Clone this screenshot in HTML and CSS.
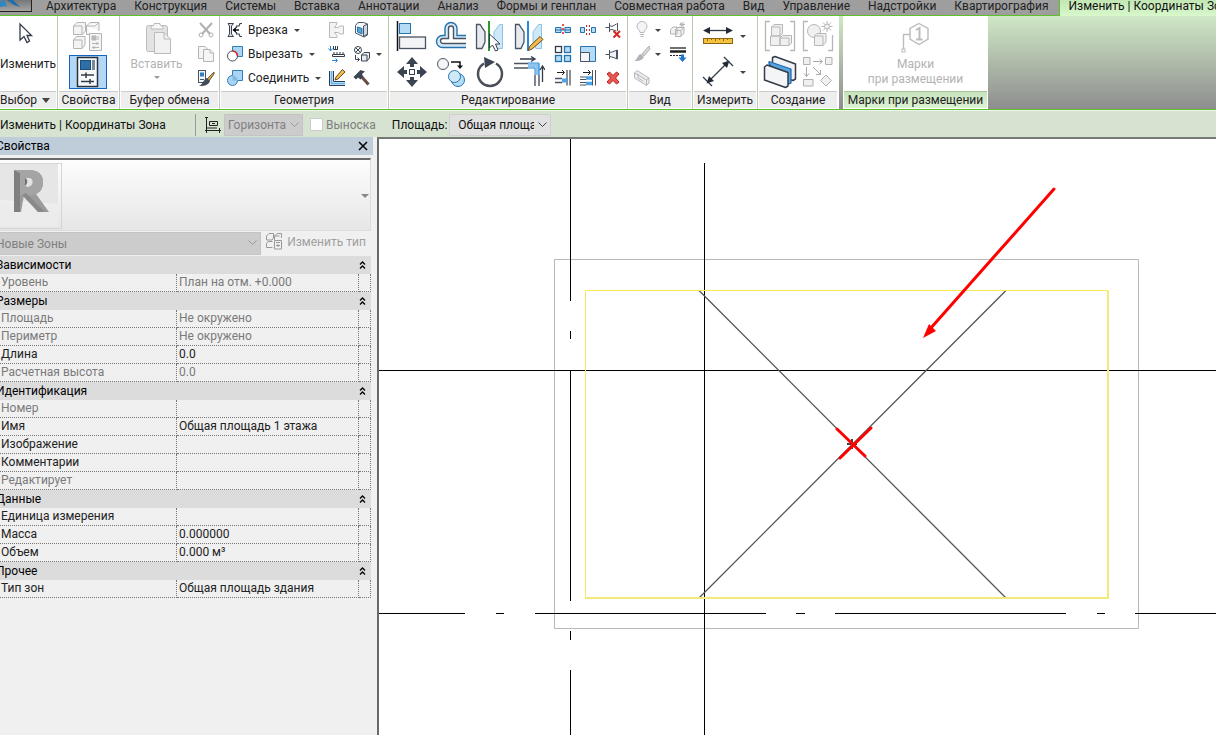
FILE: index.html
```html
<!DOCTYPE html>
<html lang="ru">
<head>
<meta charset="utf-8">
<title>Изменить | Координаты Зона</title>
<link rel="stylesheet" href="styles.css">
</head>
<body>
<nav class="tabs">
  <button class="app" aria-label="Меню приложения"><svg width="31" height="11" viewBox="0 0 31 11"><path d="M0 2 4 0 7 7 4 6 0 7Z" fill="#2a86c7"/><path d="M7 0H13L20 7 14 5Z" fill="#1c6eb0"/></svg></button>
  <a class="tab" href="#">Архитектура</a>
  <a class="tab" href="#">Конструкция</a>
  <a class="tab" href="#">Системы</a>
  <a class="tab" href="#">Вставка</a>
  <a class="tab" href="#">Аннотации</a>
  <a class="tab" href="#">Анализ</a>
  <a class="tab" href="#">Формы и генплан</a>
  <a class="tab" href="#">Совместная работа</a>
  <a class="tab" href="#">Вид</a>
  <a class="tab" href="#">Управление</a>
  <a class="tab" href="#">Надстройки</a>
  <a class="tab" href="#">Квартирография</a>
  <a class="tab active" href="#">Изменить | Координаты Зона</a>
</nav>

<div class="ribbon">
  <section class="panel p-select">
    <div class="tools center">
      <button class="big"><svg width="32" height="32" viewBox="0 0 32 32"><path d="M8 4V20L12 16.500 15 22.500 17.500 21 15 15.500H19.500Z" fill="#fff" stroke="#333c4a" stroke-width="1.300"/></svg><span>Изменить</span></button>
    </div>
    <h2>Выбор <i class="arrow wide"></i></h2>
  </section>

  <section class="panel p-props">
    <div class="tools center">
      <button class="type" disabled aria-label="Свойства типа"><svg width="32" height="32" viewBox="0 0 32 32" fill="#f4f4f4" stroke="#b4b4b4"><path d="M1.500 5 5 1.500H13.500V10L10.500 13.500H1.500ZM1.500 5H10V13.500M14.500 5 18 1.500H27V10M14.500 5H23L27 1.500M14.500 5V13.500H19M1.500 19 4.500 15.500H13V24L10 27.500H1.500ZM1.500 19H10V27.500"/><path d="M17.500 12.500H29.500V29.500H17.500Z"/><path d="M20 15H24V19H20Z" fill="#bbb"/><path d="M26 15V19M20 22.500H27M25 21V24M20 26.500H27M22 25V28"/></svg></button>
      <button class="props pressed" aria-label="Свойства"><svg width="32" height="32" viewBox="0 0 32 32"><rect x="5.500" y="1.500" width="20" height="29" fill="#f7f8fa" stroke="#2b3340" stroke-width="1.500"/><rect x="8.500" y="4.500" width="10" height="9" fill="#2f6fa8" stroke="#1d4c7c"/><path d="M20 4V14H23V4Z" fill="#7d8896"/><path d="M9 19H22M14 16.500V22M9 25.500H22M18 23V28" stroke="#333c4a" stroke-width="1.500"/></svg></button>
    </div>
    <h2>Свойства</h2>
  </section>

  <section class="panel p-clip">
    <div class="tools">
      <button class="big paste" disabled><svg width="32" height="36" viewBox="0 0 32 36" fill="#f1f1f1" stroke="#bbb"><rect x="5.500" y="4.500" width="21" height="26" rx="2" fill="#e3e3e3"/><path d="M10 8V5.500L13 4V2.500H19V4L22 5.500V8Z" fill="#f8f8f8"/><path d="M13.500 11.500H23L29.500 18V32.500H13.500Z"/><path d="M23 11.500V18H29.500" fill="none"/></svg><span>Вставить</span><i class="arrow"></i></button>
      <div class="small-grid one">
        <button disabled aria-label="Вырезать в буфер"><svg width="18" height="18" viewBox="0 0 18 18" fill="none" stroke="#b0b0b0"><path d="M3 2 13 13M15 2 5 13" stroke-width="2"/><circle cx="4" cy="14" r="2"/><circle cx="14" cy="14" r="2"/></svg></button>
        <button disabled aria-label="Копировать в буфер"><svg width="18" height="18" viewBox="0 0 18 18" fill="#f5f5f5" stroke="#b4b4b4"><path d="M1.500 1.500H8L11.500 5V13.500H1.500Z"/><path d="M6.500 4.500H13L16.500 8V16.500H6.500Z"/><path d="M13 4.500V8H16.500"/></svg></button>
        <button aria-label="Копирование свойств"><svg width="18" height="18" viewBox="0 0 18 18"><rect x="1.500" y="1.500" width="7" height="12" fill="#f4f6f8" stroke="#4a5462"/><rect x="3" y="3.500" width="4" height="4" fill="#2f7fc8"/><path d="M3 10.500H7" stroke="#4a5462"/><path d="M17 3 10 10 12 12 17 5Z" fill="#d9a441" stroke="#6b5a3a"/><path d="M10 9 13 12C11 17 6 17 2 17 6 15 6 11 10 9Z" fill="#444d5a"/></svg></button>
      </div>
    </div>
    <h2>Буфер обмена</h2>
  </section>

  <section class="panel p-geom">
    <div class="tools">
      <div class="labelled">
        <button><svg width="16" height="16" viewBox="0 0 16 16" fill="none" stroke="#3b4452"><path d="M1 1.500H6.500L4.500 4V12L6.500 14.500H1L2.500 12V4Z" fill="#dde2e8"/><path d="M15 1.500H13L12 4H9.500V6M9.500 10V12H12L13 14.500H15" stroke-width="1.200"/><path d="M6 8H12" stroke="#111" stroke-width="1.500"/><path d="M9 5 5.500 8 9 11Z" fill="#111" stroke="none"/></svg><span>Врезка</span><i class="arrow"></i></button>
        <button><svg width="16" height="16" viewBox="0 0 16 16"><path d="M5.500.500H15.500V10.500H5.500Z" fill="#a9d4f3" stroke="#2f7fb8"/><circle cx="5.500" cy="10" r="5" fill="#fff" stroke="#444d5a"/><path d="M5.500 5A5 5 0 0 1 10.500 10" fill="none" stroke="#e02020" stroke-width="1.500"/></svg><span>Вырезать</span><i class="arrow"></i></button>
        <button><svg width="16" height="16" viewBox="0 0 16 16" fill="#a9d4f3" stroke="#2f7fb8"><path d="M5.500.500H15.500V10.500H10.500A5 5 0 1 1 5.500 5.500Z"/><path d="M5.500 5.500A5 5 0 0 1 10.500 10.500H5.500Z" fill="#7fbbe6" stroke="none"/></svg><span>Соединить</span><i class="arrow"></i></button>
      </div>
      <div class="small-grid two">
        <button disabled aria-label="Соединение крыш"><svg width="18" height="18" viewBox="0 0 18 18" fill="#f3f3f3" stroke="#b9b9b9"><path d="M1.500 1.500H9V3L6.500 6.500H10L12 5H15.500V13H12L10 11.500H6.500L9 14.500V16.500H1.500Z"/></svg></button>
        <button aria-label="Соединение стен"><svg width="18" height="18" viewBox="0 0 18 18"><path d="M2.500 4.500 5 1.500H10.500L14.500 3V14L11 16 2.500 12Z" fill="#f5f7f9" stroke="#4a5462"/><path d="M10.500 5V15.500L14.500 13V3Z" fill="#cfd6de" stroke="#4a5462"/><path d="M4.500 6 9 7.500V13L4.500 11Z" fill="#57a5df" stroke="#2672ad"/></svg></button>
        <button aria-label="Балки"><svg width="18" height="18" viewBox="0 0 18 18"><path d="M2.500 1V5M.500 3.500 2.500 6 4.500 3.500M4 15.500H9M7.500 13.500 9.500 15.500 7.500 17.500" fill="none" stroke="#2589dd"/><path d="M5.500 1V4.500H9.500V1M7.500 1V4.500M4.500 9.500H16.500V11.500H4.500Z" fill="#fff" stroke="#333c4a"/><path d="M5 8H16" stroke="#333c4a" stroke-dasharray="2 1"/></svg></button>
        <button aria-label="Разделить грань"><svg width="18" height="18" viewBox="0 0 18 18" fill="#fff" stroke="#3b4452"><circle cx="5" cy="5" r="3.500"/><path d="M2.500 2.500 7.500 7.500M7.500 2.500 2.500 7.500"/><path d="M8.500 10 11 7.500H16.500V13L14 16H8.500ZM8.500 10H14V16" fill="#e8ebef"/><path d="M2.500 10V14.500H6M4.500 12.500 6.500 14.500 4.500 16.500" fill="none"/></svg></button>
        <button aria-label="Профиль стены"><svg width="18" height="18" viewBox="0 0 18 18"><path d="M1.500 2V16.500H17M5.500 2V12.500H17" fill="none" stroke="#333c4a"/><path d="M3.500 2V14.500H17" fill="none" stroke="#62b5ef" stroke-width="2"/><path d="M14.500.500 17 3 10 10 7 11 8 8Z" fill="#f2bc4b" stroke="#6b4a22"/></svg></button>
        <button aria-label="Разрушить"><svg width="18" height="18" viewBox="0 0 18 18"><path d="M8 7 15.500 15.500" stroke="#6a4a44" stroke-width="3"/><path d="M.500 8 7.500 1 12 2.500 9 5 10 8 7.500 10.500 5 8.500 3 10.500Z" fill="#3b4452"/></svg></button>
      </div>
      <div class="arrow-col"><i class="arrow"></i></div>
    </div>
    <h2>Геометрия</h2>
  </section>

  <section class="panel p-edit">
    <div class="tools">
      <div class="large-grid four">
        <button aria-label="Выровнять"><svg width="32" height="32" viewBox="0 0 32 32"><path d="M1.500 1V31" stroke="#111" stroke-width="1.500"/><rect x="3.500" y="3.500" width="11" height="10" fill="#b5dcf6" stroke="#2672ad"/><rect x="3.500" y="17" width="26" height="11.500" fill="#f2f4f6" stroke="#4a5462" stroke-width="1.300"/></svg></button>
        <button aria-label="Смещение"><svg width="32" height="32" viewBox="0 0 32 32" fill="none"><path d="M31 27.500H7.500A6 6 0 0 1 7.500 15.500H10V8.500A6 6 0 0 1 22 8.500V15.500H31" stroke="#2672ad" stroke-width="1.400" fill="#d7ebf8"/><path d="M31 23.500H8A2.500 2.500 0 0 1 8 18.500H13.500V8.500A2.500 2.500 0 0 1 18.500 8.500V18.500H31" stroke="#4a5462" stroke-width="1.400" fill="#fff"/></svg></button>
        <button aria-label="Отразить по оси"><svg width="32" height="32" viewBox="0 0 32 32"><path d="M2.500 28.500V4.500H6L11 12V22L8 28.500Z" fill="#e7eaee" stroke="#4a5462" stroke-width="1.300"/><path d="M28.500 28.500V4.500H25.500L20 12V22L23 28.500Z" fill="#cfe8f8" stroke="#8cc4e8"/><path d="M15 1V31" stroke="#2b9a2b" stroke-width="2"/><path d="M15.500 14V28L18.500 25 21.500 31 24 30 21.500 24H26Z" fill="#fff" stroke="#333c4a"/></svg></button>
        <button aria-label="Отразить по линии"><svg width="32" height="32" viewBox="0 0 32 32"><path d="M2.500 28.500V4.500H6L11 12V22L8 28.500Z" fill="#e7eaee" stroke="#4a5462" stroke-width="1.300"/><path d="M28.500 28.500V4.500H25.500L20 12V22L23 28.500Z" fill="#cfe8f8" stroke="#8cc4e8"/><path d="M15 1V31" stroke="#2589dd" stroke-width="2"/><path d="M27 16.500 30 19.500 19 29 15.500 30.500 16.500 26.500Z" fill="#f2bc4b" stroke="#6b4a22"/></svg></button>
        <button aria-label="Переместить"><svg width="32" height="32" viewBox="0 0 32 32"><path d="M16 1 22 8H18V11H14V8H10ZM16 31 22 24H18V21H14V24H10ZM1 16 8 10V14H11V18H8V22ZM31 16 24 10V14H21V18H24V22Z" fill="#3b4452"/><rect x="13.500" y="13.500" width="5" height="5" fill="#fff" stroke="#3b4452"/></svg></button>
        <button aria-label="Копировать"><svg width="32" height="32" viewBox="0 0 32 32"><circle cx="8" cy="8" r="5.500" fill="#f4f5f7" stroke="#4a5462"/><circle cx="23" cy="24" r="6.500" fill="#b5dcf6" stroke="#2672ad"/><circle cx="19.500" cy="20.500" r="6" fill="#cfe8f8" stroke="#2672ad"/><path d="M16 6H25V11" fill="none" stroke="#111" stroke-width="1.500"/><path d="M22 9.500H28L25 13Z" fill="#111"/></svg></button>
        <button aria-label="Повернуть"><svg width="32" height="32" viewBox="0 0 32 32"><path d="M22 7.500A12 12 0 1 1 10 7.500" fill="none" stroke="#4a4f58" stroke-width="2.500"/><path d="M10 1 21 6 11 12Z" fill="#3b4452"/></svg></button>
        <button aria-label="Обрезать"><svg width="32" height="32" viewBox="0 0 32 32" fill="none"><path d="M1 7.500H15M1 12H15M22 19V30M26 19V30" stroke="#4a5462" stroke-width="1.400"/><path d="M15 9.500H24.500V19" stroke="#8cc4f0" stroke-width="4"/><path d="M15 7H26V19M15 12H22V19" stroke="#2589dd"/><path d="M7 3H21M18 .500 22 3 18 5.500M29.500 26V11M27 14 29.500 10 32 14" stroke="#333c4a" stroke-width="1.300"/></svg></button>
      </div>
      <div class="small-grid three">
        <button aria-label="Разделить"><svg width="18" height="18" viewBox="0 0 18 18"><path d="M1.500 6.500H7V11.500H1.500ZM11 6.500H16.500V11.500H11Z" fill="#b5dcf6" stroke="#2672ad"/><path d="M2 9H16" stroke="#2672ad"/><path d="M9 3V15" stroke="#e02020" stroke-width="1.500" stroke-dasharray="2 2"/></svg></button>
        <button aria-label="Разделить с зазором"><svg width="18" height="18" viewBox="0 0 18 18"><path d="M1.500 6.500H5.500V11.500H1.500ZM12.500 6.500H16.500V11.500H12.500Z" fill="#b5dcf6" stroke="#2672ad"/><path d="M7.500 4V14M10.500 4V14" stroke="#e02020" stroke-dasharray="2 2"/></svg></button>
        <button aria-label="Открепить"><svg width="18" height="18" viewBox="0 0 18 18"><path d="M1.500 6.500H5.500M5.500 2V11M5.500 4.500 8 5.500 12.500 3M5.500 9 8 8.500 12.500 10M13.500 2V10" fill="none" stroke="#4a5462"/><path d="M9.500 10 16 16.500M16 10 9.500 16.500" stroke="#d32424" stroke-width="2"/></svg></button>
        <button aria-label="Массив"><svg width="18" height="18" viewBox="0 0 18 18" fill="#b5dcf6" stroke="#2672ad" stroke-width="1.300"><rect x="1.500" y="1.500" width="6" height="6" fill="#fff" stroke="#333c4a"/><rect x="10.500" y="1.500" width="6" height="6"/><rect x="1.500" y="10.500" width="6" height="6"/><rect x="10.500" y="10.500" width="6" height="6"/></svg></button>
        <button aria-label="Масштаб"><svg width="18" height="18" viewBox="0 0 18 18"><path d="M1.500 1.500H16.500V16.500H1.500Z" fill="#b5dcf6" stroke="#2672ad"/><path d="M1.500 7.500H10.500V16.500H1.500Z" fill="#f4f5f7" stroke="#4a5462"/></svg></button>
        <button aria-label="Закрепить"><svg width="18" height="18" viewBox="0 0 18 18" fill="#f0f2f4" stroke="#4a5462"><path d="M1.500 9.500H5.500M5.500 5V14M5.500 7.500 8 7 13.500 5V14L8 12 5.500 11.500M12.500 5V14"/></svg></button>
        <button aria-label="Обрезать один"><svg width="18" height="18" viewBox="0 0 18 18" fill="none"><path d="M1 9.500H8M1 13.500H8M13 1V16.500M16 1V16.500" stroke="#4a5462" stroke-width="1.300"/><path d="M8 11.500H13" stroke="#4ba3ea" stroke-width="4"/><path d="M3 3.500H10M8 1 10.500 3.500 8 6" stroke="#222"/></svg></button>
        <button aria-label="Обрезать несколько"><svg width="18" height="18" viewBox="0 0 18 18" fill="none"><path d="M1 8H7M1 10.500H7M1 13.500H7M1 16H7M13.500 1V16.500M16.500 1V16.500" stroke="#4a5462"/><path d="M7 9H13M7 14.500H13" stroke="#4ba3ea" stroke-width="3.500"/><path d="M4 3.500H11M9 1 11.500 3.500 9 6" stroke="#222"/></svg></button>
        <button aria-label="Удалить"><svg width="18" height="18" viewBox="0 0 18 18"><path d="M3 5 5.500 3 9 6.500 12.500 3 15 5 11.500 9 15 13 12.500 15 9 11.500 5.500 15 3 13 6.500 9Z" fill="#e8584f" stroke="#b51f1f"/></svg></button>
      </div>
    </div>
    <h2>Редактирование</h2>
  </section>

  <section class="panel p-view">
    <div class="tools">
      <div class="small-grid view">
        <button disabled aria-label="Скрыть"><svg width="18" height="18" viewBox="0 0 18 18" fill="#f4f4f4" stroke="#b7b7b7"><path d="M7 11.500C7 9 4 8.500 4 5.500A5 5 0 0 1 14 5.500C14 8.500 11 9 11 11.500ZM7 13.500H11M7.500 15.500H10.500"/></svg></button>
        <i class="arrow"></i>
        <button disabled aria-label="Вырезать вид"><svg width="18" height="18" viewBox="0 0 18 18" fill="#f1f1f1" stroke="#b4b4b4"><path d="M1.500 8.500 4 6H8V13H1.500ZM6.500 8.500 9 6.500H15V12L12 15.500H6.500ZM6.500 9.500H12V15.500M12 9.500 15 6.500M13 1V6M10.500 3.500H16M11 2 15 5.500M15 1.500 11 5.500"/></svg></button>
        <button disabled aria-label="Переопределить"><svg width="18" height="18" viewBox="0 0 18 18"><path d="M16 1 9 9 11 11 17 4Z" fill="#d9d9d9" stroke="#b0b0b0"/><path d="M8 9 11 12C9 16 5 16 1 16 5 14 4 10 8 9Z" fill="#b3b3b3"/></svg></button>
        <i class="arrow"></i>
        <button aria-label="Толщина линий"><svg width="18" height="18" viewBox="0 0 18 18"><path d="M1 3H17" stroke="#222" stroke-width="1.300"/><path d="M1 6.500H17" stroke="#222" stroke-width="2.500"/><path d="M1 10.500H12" stroke="#222" stroke-dasharray="2 1"/><path d="M12 9.500H15V12.500H17.500L13.500 17 9.500 12.500H12Z" fill="#1976d2"/></svg></button>
        <button disabled aria-label="Рамка"><svg width="18" height="18" viewBox="0 0 18 18" fill="#ededed" stroke="#b7b7b7"><path d="M1.500 4 4 1.500 16 9V14L13.500 16.500 1.500 9ZM1.500 4 13.500 11V16.500M13.500 11 16 9M5 4.500V9L10 12"/></svg></button>
      </div>
    </div>
    <h2>Вид</h2>
  </section>

  <section class="panel p-measure">
    <div class="tools">
      <div class="large-grid measure">
        <button aria-label="Измерить расстояние"><svg width="32" height="32" viewBox="0 0 32 32"><path d="M4 10.500H28" stroke="#333c4a" stroke-width="1.300"/><path d="M1 10.500 8 7V14ZM31 10.500 24 7V14Z" fill="#222a36"/><rect x="1.500" y="18.500" width="29" height="5" fill="#f3c33c" stroke="#8f6513"/><path d="M5.500 18V21M9.500 18V20M13.500 18V21M17.500 18V20M21.500 18V21M25.500 18V20" stroke="#8f6513"/></svg></button>
        <i class="arrow"></i>
        <button aria-label="Размер"><svg width="32" height="32" viewBox="0 0 32 32"><path d="M7 25 25 7M1 21 10 30M22 1 31 10" stroke="#333c4a" stroke-width="1.300"/><path d="M4.500 27.500 7 20 12 25ZM27.500 4.500 25 12 20 7Z" fill="#222a36"/></svg></button>
        <i class="arrow"></i>
      </div>
    </div>
    <h2>Измерить</h2>
  </section>

  <section class="panel p-create">
    <div class="tools">
      <div class="large-grid create">
        <button disabled aria-label="Создать сборку"><svg width="32" height="32" viewBox="0 0 32 32" fill="#f0f0f0" stroke="#b7b7b7"><path d="M6 1.500H1.500V30.500H6M26 1.500H30.500V30.500H26" fill="none" stroke-width="1.300"/><path d="M7.500 7 10 4.500H18.500V13L16 16H7.500ZM7.500 7H16V16M6.500 16H16V25.500H6.500ZM16 18 18.500 15.500H27.500V23L25 25.500H16ZM16 18H25V25.500"/></svg></button>
        <button disabled aria-label="Создать группу"><svg width="32" height="32" viewBox="0 0 32 32" fill="#f0f0f0" stroke="#b7b7b7"><path d="M6 1.500H1.500V30.500H6M26 30.500H30.500V15" fill="none" stroke-width="1.300"/><circle cx="12" cy="11" r="6.500"/><path d="M12.500 16 15 13.500H24V22L21 25.500H12.500ZM12.500 16H21V25.500M25 1V12M19.500 6.500H30.500M21 2.500 29 10.500M29 2.500 21 10.500"/><circle cx="25" cy="6.500" r="2.500"/></svg></button>
        <button aria-label="Создать подобие"><svg width="34" height="34" viewBox="0 0 34 34" stroke-linejoin="round"><path d="M9.500 6V2.500L12 1.500 32.500 9V24L30 25.500 9.500 18Z" fill="#f0f2f4" stroke="#333c4a" stroke-width="1.500"/><path d="M6 9V6.500L28 14V28L26 29Z" fill="#57a5df" stroke="#1d66ac" stroke-width="1.200"/><path d="M1.500 12 4 10 25 17.500V31L22.500 32.500 1.500 25Z" fill="#f4f5f7" stroke="#333c4a" stroke-width="1.500"/></svg></button>
        <button disabled aria-label="Группы деталей"><svg width="32" height="32" viewBox="0 0 32 32" fill="#f0f0f0" stroke="#b0b0b0"><path d="M1.500 1.500H8V8.500H1.500ZM23.500 1.500H30V8.500H23.500ZM1.500 23.500H11V30H1.500ZM24 19 29.500 24.500 24 30 18.500 24.500Z"/><path d="M11 5.500H20M17.500 3 20.500 5.500 17.500 8M4.500 11V20M2 17.500 4.500 20.500 7 17.500M11 11 18 18M18.500 14V18.500H14" fill="none" stroke="#a8a8a8"/></svg></button>
      </div>
    </div>
    <h2>Создание</h2>
  </section>

  <section class="panel context">
    <div class="tools center">
      <button class="big tag" disabled><svg width="32" height="32" viewBox="0 0 32 32" fill="none" stroke="#bcbcbc"><path d="M20 2.500 29 7.500V18L20 23.500 11 18V7.500ZM11 13.500H4.500V28" stroke-width="1.400"/><rect x="3" y="28" width="3" height="3"/><path d="M17 9 20.500 7V18M17 18.500H23.500" stroke-width="2"/></svg><span>Марки<br>при размещении</span></button>
    </div>
    <h2>Марки при размещении</h2>
  </section>
</div>

<div class="options">
  <span class="mode">Изменить | Координаты Зона</span>
  <label class="orient" for="orient" title="Ориентация"><svg width="18" height="18" viewBox="0 0 18 18" fill="none" stroke="#222"><path d="M2.500 1V17M1 1.500H4M1 14.500H17M15.500 12V17M5.500 5.500H13.500V9.500H5.500ZM8 7.500H11M2.500 12H13"/></svg></label>
  <span class="combo off"><select id="orient" disabled><option>Горизонта</option></select><svg width="9" height="6" viewBox="0 0 9 6"><path d="M.500.500 4.500 4.500 8.500.500" fill="none" stroke="#999"/></svg></span>
  <label class="check"><input type="checkbox" disabled>Выноска</label>
  <label class="area" for="area">Площадь:</label>
  <span class="combo"><select id="area"><option>Общая площадь</option></select><svg width="9" height="6" viewBox="0 0 9 6"><path d="M.500.500 4.500 4.500 8.500.500" fill="none" stroke="#444"/></svg></span>
</div>

<main class="work">
  <aside class="palette">
    <header class="caption"><span>Свойства</span><button aria-label="Закрыть"><svg width="10" height="10" viewBox="0 0 10 10"><path d="M1 1 9 9M9 1 1 9" stroke="#000" stroke-width="1.500"/></svg></button></header>
    <div class="selector">
      <div class="thumb"><svg width="62" height="64" viewBox="0 0 62 64"><path d="M0 0H58V40L0 36Z" fill="#e6e6e6"/><path d="M0 38 58 44V62H0Z" fill="#ececec"/><path d="M14 6H29C39 6 43 11 43 18 43 25 40 28 36 30L49 48H38L24 31 21 48H14Z" fill="#9b9b9b"/><path d="M14 6 20 9V48H14Z" fill="#7f7f7f"/><path d="M14 6H29C39 6 43 11 43 18 43 25 40 28 36 30L33 31H20V9Z" fill="#a4a4a4"/><path d="M25 14H29C34 14 34 22 28 23L25 22Z" fill="#e2e2e2"/><path d="M25 14C28 15 28 20 25 22Z" fill="#707070"/><path d="M22 31 26 29 45 48H38Z" fill="#898989"/></svg></div>
      <i class="arrow drop"></i>
    </div>
    <div class="filter">
      <span class="combo off wide"><select disabled aria-label="Фильтр"><option>Новые Зоны</option></select><svg width="9" height="6" viewBox="0 0 9 6"><path d="M.500.500 4.500 4.500 8.500.500" fill="none" stroke="#999"/></svg></span>
      <button class="edit" disabled><svg width="17" height="17" viewBox="0 0 17 17" fill="none" stroke="#999"><path d="M.500 3 3 .500H7.500V5L6 7H.500ZM8.500 3 11 .500H15.500V5M8.500 7V3H13.500M.500 10.500 2 8.500H6.500M.500 10.500V14.500H6.500M8.500 7.500H15.500V16H8.500ZM10 9.500H14M10 12.500H14M12 11V14"/></svg>Изменить тип</button>
    </div>
    <table class="grid">
      <colgroup><col class="c-name"><col class="c-value"><col class="c-more"></colgroup>
      <tbody>
        <tr class="group"><th colspan="2">Зависимости</th><td><svg class="chev" width="7" height="8" viewBox="0 0 7 8"><path d="M1 3.500 3.500 1 6 3.500M1 7.500 3.500 5 6 7.500"/></svg></td></tr>
        <tr class="ro"><th>Уровень</th><td>План на отм. +0.000</td><td></td></tr>
        <tr class="group"><th colspan="2">Размеры</th><td><svg class="chev" width="7" height="8" viewBox="0 0 7 8"><path d="M1 3.500 3.500 1 6 3.500M1 7.500 3.500 5 6 7.500"/></svg></td></tr>
        <tr class="ro"><th>Площадь</th><td>Не окружено</td><td></td></tr>
        <tr class="ro"><th>Периметр</th><td>Не окружено</td><td></td></tr>
        <tr><th>Длина</th><td>0.0</td><td></td></tr>
        <tr class="ro"><th>Расчетная высота</th><td>0.0</td><td></td></tr>
        <tr class="group"><th colspan="2">Идентификация</th><td><svg class="chev" width="7" height="8" viewBox="0 0 7 8"><path d="M1 3.500 3.500 1 6 3.500M1 7.500 3.500 5 6 7.500"/></svg></td></tr>
        <tr class="ro"><th>Номер</th><td></td><td></td></tr>
        <tr><th>Имя</th><td>Общая площадь 1 этажа</td><td></td></tr>
        <tr><th>Изображение</th><td></td><td></td></tr>
        <tr><th>Комментарии</th><td></td><td></td></tr>
        <tr class="ro"><th>Редактирует</th><td></td><td></td></tr>
        <tr class="group"><th colspan="2">Данные</th><td><svg class="chev" width="7" height="8" viewBox="0 0 7 8"><path d="M1 3.500 3.500 1 6 3.500M1 7.500 3.500 5 6 7.500"/></svg></td></tr>
        <tr><th>Единица измерения</th><td></td><td></td></tr>
        <tr><th>Масса</th><td>0.000000</td><td></td></tr>
        <tr><th>Объем</th><td>0.000 м³</td><td></td></tr>
        <tr class="group"><th colspan="2">Прочее</th><td><svg class="chev" width="7" height="8" viewBox="0 0 7 8"><path d="M1 3.500 3.500 1 6 3.500M1 7.500 3.500 5 6 7.500"/></svg></td></tr>
        <tr><th>Тип зон</th><td>Общая площадь здания</td><td></td></tr>
      </tbody>
    </table>
  </aside>
  <div class="canvas">
    <svg class="plan" width="100%" height="100%" aria-label="План этажа">
      <g transform="translate(-379 -139)" fill="none">
        <path d="M554.500 259.500H1138.500V628.500H554.500Z" stroke="#b8b8b8"/>
        <path d="M570.500 139V301M570.500 331V339M570.500 371V601M570.500 631V640M570.500 670V2000M704.500 163V2000M379 370.500H4000M379 613.500H465M496 613.500H504M535 613.500H766M796 613.500H805M835 613.500H1066M1097 613.500H1105M1135 613.500H4000" stroke="#000"/>
        <path d="M699 290.500 1006 598M1006 290.500 699 598" stroke="#555" stroke-width="1.300"/>
        <path d="M585.500 598V290.500H1108" stroke="#f9e853"/>
        <path d="M1108 291V598H585" stroke="#f3e87a" stroke-width="2"/>
        <path d="M847 444H857M852 439V449" stroke="#444" stroke-width="2"/>
        <path d="M837 429 865 456M871 428 840 458M1054 189 930 329" stroke="#f00" stroke-width="3" stroke-linecap="round"/>
        <path d="M923 338 929 324 936 331Z" fill="#f00"/>
      </g>
    </svg>
  </div>
</main>
</body>
</html>
```
FILE: styles.css
```css
* { box-sizing: border-box; }

body {
  margin: 0;
  height: 100vh;
  display: flex;
  flex-direction: column;
  overflow: hidden;
  background: #f0f0f0;
  color: #222;
  font: 12px/16px Roboto, "Noto Sans", sans-serif;
}

button, select, input { font: inherit; color: inherit; }
button { border: 0; padding: 0; background: none; display: flex; align-items: center; justify-content: center; }
button:disabled { color: #b3b3b3; }
svg { display: block; flex: none; }

.arrow { width: 0; height: 0; border: 3px solid transparent; border-top-color: #444; border-bottom: 0; flex: none; align-self: center; justify-self: center; }
.arrow.wide { border-width: 5px 4px 0; }
button:disabled .arrow { border-top-color: #999; }

/* tabs */
.tabs { display: flex; flex: none; height: 16px; background: #9e9e9e; border-bottom: 1px solid #5fc02a; white-space: nowrap; }
.app { width: 32px; height: 12px; margin-right: 5px; justify-content: flex-start; align-items: flex-start; background: linear-gradient(#777, #a4a4a4); border: solid #222; border-width: 0 1px 1px 0; }
.tab { padding: 0 9px; line-height: 13px; color: #222; text-decoration: none; }
.tab.active { height: 16px; margin-left: 2px; padding-left: 8px; flex: 1 0 auto; background: linear-gradient(#c2e6b4, #d8f8cc); border-left: 1px solid #5fc02a; color: #111; }

/* ribbon */
.ribbon { display: flex; flex: none; height: 93px; background: linear-gradient(#cfe8c5, #8d8d8d); overflow: hidden; }
.panel { display: flex; flex-direction: column; flex: none; background: #fff; border-right: 1px solid #b9cbb3; }
.tools { display: flex; flex: 1; padding-top: 2px; }
.tools.center { flex-direction: column; align-items: center; }
.panel h2 { display: flex; align-items: center; justify-content: center; gap: 5px; margin: 0 1px 1px; height: 17px; background: #eee; border-top: 1px solid #ccc; font-size: 12px; font-weight: 400; white-space: nowrap; }
.p-select { width: 58px; }
.panel.p-select h2 { justify-content: flex-start; margin-left: 0; }
.p-props { width: 62px; }
.p-clip { width: 100px; }
.p-geom { width: 169px; }
.p-edit { width: 239px; }
.p-view { width: 65px; }
.p-measure { width: 65px; }
.p-create { width: 81px; border-right: 0; }
.p-create h2 { margin-right: 2px; }
.context { width: 145px; margin-left: 4px; border-right: 0; }
.panel.context h2 { background: linear-gradient(#c8e2bd, #dcf3d3); border-color: #a9c79d; }

.big { flex-direction: column; }
.big svg { margin-bottom: 4px; }
.big span { white-space: nowrap; line-height: 15px; }
.panel.p-select .tools { align-items: flex-start; padding-top: 4px; }
.p-select .big span { line-height: 16px; }
.p-props .tools { padding: 3px 2px 0 0; }
.type { height: 36px; }
.props { width: 38px; height: 34px; background: #b3d7f5; border: 1px solid #1565c0; }
.paste { width: 73px; padding-bottom: 10px; }
.paste svg { margin-bottom: 0; }
.paste .arrow { margin-top: 4px; }

.small-grid { display: grid; grid-template-rows: repeat(3, 24px); align-items: center; justify-items: center; }
.small-grid.one { grid-template-columns: 25px; }
.small-grid.two { grid-template-columns: 25px 25px; }
.small-grid.three { grid-template-columns: repeat(3, 25px); margin-left: 2px; }
.small-grid.view { grid-template-columns: 24px 8px 32px; margin-left: 2px; }
.labelled { display: flex; flex-direction: column; width: 104px; padding-left: 7px; }
.labelled button { height: 24px; gap: 5px; justify-content: flex-start; }
.labelled .arrow { margin-left: 1px; }
.arrow-col { display: flex; width: 10px; height: 72px; justify-content: center; }
.large-grid { display: grid; grid-template-rows: 36px 36px; align-items: center; justify-items: center; }
.large-grid.four { grid-template-columns: repeat(4, 39px); margin-left: 3px; }
.large-grid.measure { grid-template-columns: 40px 10px; margin-left: 5px; }
.large-grid.create { grid-template-columns: 38px 38px; margin-left: 3px; }
.panel.context .tools { padding-top: 5px; }

/* options bar */
.options { display: flex; align-items: center; flex: none; height: 28px; padding-top: 2px; background: #d7e3d1; border-top: 1px solid #5fc02a; box-shadow: inset 0 1px #eef5ea; white-space: nowrap; }
.mode { width: 196px; line-height: 22px; border-right: 1px solid #999; color: #111; }
.orient { margin: 0 2px 0 8px; }
.combo { position: relative; display: flex; width: 102px; height: 22px; }
.combo select { appearance: none; width: 100%; margin: 0; padding: 0 16px 0 8px; border: 1px solid #d0d0d0; border-radius: 0; background: #e1e1e1; color: #111; opacity: 1; }
.combo svg { position: absolute; right: 4px; top: 8px; }
.combo.off { width: 79px; }
.combo.off select { padding: 0 16px 0 3px; background: #ccc; border-color: #c4c4c4; color: #808080; }
.check { display: flex; align-items: center; gap: 3px; margin-left: 7px; color: #808080; }
.check input { appearance: none; width: 13px; height: 13px; margin: 0; background: #fff; border: 1px solid #ccc; }
.area { margin: 0 2px 0 16px; color: #111; }

/* work area */
.work { display: flex; flex: 1; min-height: 0; }
.palette { display: flex; flex-direction: column; flex: none; width: 377px; padding-right: 4px; overflow: hidden; }
.caption { display: flex; justify-content: space-between; align-items: center; flex: none; height: 18px; margin-bottom: 3px; padding-right: 5px; background: #bfccda; color: #000; line-height: 20px; }
.caption span { margin-left: -4px; }
.selector { display: flex; justify-content: space-between; align-items: center; height: 73px; flex: none; width: 371px; padding-top: 1px; background: linear-gradient(#fdfdfd, #e6e6e6); border: solid #ddd; border-width: 2px 1px 1px 0; border-top-color: #696969; }
.thumb { width: 62px; height: 66px; border: 1px solid #d5d5d5; border-left: 0; }
.drop { border-width: 4px 4px 0; border-top-color: #888; margin-right: 1px; }
.filter { display: flex; align-items: flex-start; flex: none; width: 371px; height: 25px; padding-top: 1px; }
.combo.off.wide { width: 261px; height: 23px; }
.combo.off.wide select { padding-left: 0; margin-left: -4px; border-left: 0; width: 265px; }
.edit { flex: 1; gap: 4px; padding-top: 1px; white-space: nowrap; }
button.edit:disabled { color: #a0a0a0; }

.grid { width: 371px; border-spacing: 0; table-layout: fixed; flex: none; }
.c-name { width: 177px; }
.c-value { width: 182px; }
.c-more { width: 12px; }
.grid tr { height: 18px; }
.grid th, .grid td { height: 18px; padding: 0 0 0 2px; line-height: 16px; font-weight: 400; text-align: left; vertical-align: top; white-space: nowrap; border: dotted #777; border-width: 0 1px 1px 0; }
.grid th { padding-left: 1px; }
.grid .ro { color: #7a7a7a; }
.grid .group { background: #dcdcdc; color: #000; }
.grid .group th, .grid .group td { border-width: 0; padding: 0; vertical-align: middle; }
.grid .group th { text-indent: -4px; }
.chev { fill: none; stroke: #000; stroke-width: 1.3; }

.canvas { flex: 1; min-width: 0; background: #fff; border: solid #696969; border-width: 2px 0 0 2px; border-top-color: #777; }
```
